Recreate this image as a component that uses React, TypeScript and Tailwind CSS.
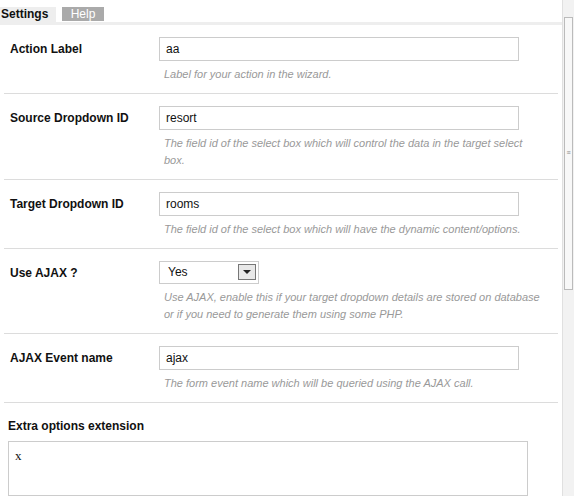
import React from "react";

const F = { fontFamily: '"Liberation Sans", Arial, sans-serif' };

function Row({ label, children, help }: { label: string; children: React.ReactNode; help: string[] }) {
  return (
    <div className="flex mx-[4px] border-b border-[#dcdcdc] pt-[12px] pb-[10px]">
      <div className="w-[155px] pl-[6px] pt-[3px] text-[12px] font-bold text-[#111]">{label}</div>
      <div className="flex-1">
        {children}
        <div className="mt-[5px] pl-[5px] text-[11px] italic text-[#999] leading-[17px]">
          {help.map((h, i) => <div key={i}>{h}</div>)}
        </div>
      </div>
    </div>
  );
}

function Input({ v }: { v: string }) {
  return (
    <div className="w-[360px] h-[24px] border border-[#ccc] bg-white pl-[6px] flex items-center text-[12px] text-[#111]">{v}</div>
  );
}

export default function App() {
  return (
    <div style={F} className="w-[574px] h-[496px] overflow-hidden bg-white flex">
      <div className="flex-1 flex flex-col">
        <div className="flex items-end h-[22px] pt-[7px]">
          <div className="h-[15px] w-[56px] bg-[#eeeeee] pl-[1px] text-[12px] font-bold text-[#111] leading-[15px]">Settings</div>
          <div className="ml-[6px] h-[14px] w-[42px] bg-[#aaaaaa] text-white text-[12px] leading-[14px] text-center mb-[1px]">Help</div>
        </div>
        <div className="h-[4px] bg-[#eeeeee]" />
        <Row label="Action Label" help={["Label for your action in the wizard."]}><Input v="aa" /></Row>
        <Row label="Source Dropdown ID" help={["The field id of the select box which will control the data in the target select", "box."]}><Input v="resort" /></Row>
        <Row label="Target Dropdown ID" help={["The field id of the select box which will have the dynamic content/options."]}><Input v="rooms" /></Row>
        <Row label="Use AJAX ?" help={["Use AJAX, enable this if your target dropdown details are stored on database", "or if you need to generate them using some PHP."]}>
          <div className="w-[100px] h-[23px] border border-[#ccc] bg-white flex items-center justify-between pl-[8px] pr-[2px] text-[12px] text-[#111]">
            <span>Yes</span>
            <div className="w-[18px] h-[16px] border border-[#777] bg-[#e8e8e8] flex items-center justify-center">
              <div className="w-0 h-0 border-l-[4px] border-r-[4px] border-t-[4px] border-l-transparent border-r-transparent border-t-[#222]" />
            </div>
          </div>
        </Row>
        <Row label="AJAX Event name" help={["The form event name which will be queried using the AJAX call."]}><Input v="ajax" /></Row>
        <div className="pl-[8px] pt-[14px] text-[12px] font-bold text-[#111]">Extra options extension</div>
        <div className="ml-[8px] mt-[6px] w-[520px] h-[80px] border border-[#ccc] pl-[6px] pt-[4px] text-[13px] text-[#111]" style={{ fontFamily: '"Liberation Serif", serif' }}>x</div>
      </div>
      <div className="w-[12px] bg-[#f2f2f2] border-l border-[#e0e0e0] relative">
        <div className="absolute left-[1px] right-[1px] top-[17px] h-[273px] bg-[#f8f8f8] border border-[#bbb] flex items-center justify-center text-[7px] text-[#888]">≡</div>
      </div>
    </div>
  );
}
